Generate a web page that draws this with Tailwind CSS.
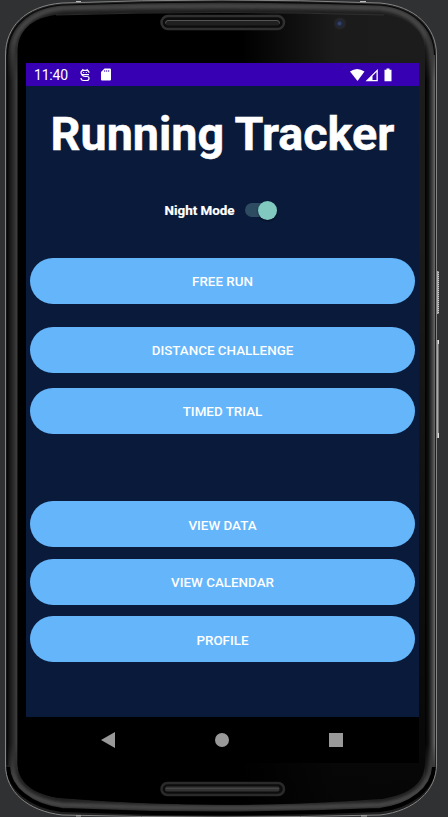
<!DOCTYPE html>
<html lang="en">
<head>
<meta charset="utf-8">
<title>Running Tracker</title>
<script src="https://cdn.jsdelivr.net/npm/@tailwindcss/browser@4"></script>
</head>
<body class="bg-[#303133] overflow-hidden font-['Roboto',sans-serif]">
<div class="relative w-[448px] h-[817px] overflow-hidden">
  <!-- Device frame -->
  <svg class="absolute inset-0" width="448" height="817" viewBox="0 0 448 817" fill="none">
    <defs>
      <linearGradient id="left"><stop offset="0" stop-color="#050505"/><stop offset=".25" stop-color="#161616"/><stop offset=".6" stop-color="#2c2c2c"/><stop offset="1" stop-color="#444"/></linearGradient>
      <linearGradient id="right"><stop offset="0" stop-color="#000"/><stop offset=".35" stop-color="#101010"/><stop offset=".7" stop-color="#3c3c3c"/><stop offset="1" stop-color="#6a6a6a"/></linearGradient>
      <linearGradient id="face"><stop offset=".55" stop-color="#000"/><stop offset=".78" stop-color="#1b1b1b"/><stop offset="1" stop-color="#1c1c1c"/></linearGradient>
      <linearGradient id="shade" x1="0" y1="0" x2="0" y2="1"><stop offset="0" stop-color="#000" stop-opacity="0"/><stop offset=".3" stop-color="#000" stop-opacity=".05"/><stop offset="1" stop-color="#000" stop-opacity=".8"/></linearGradient>
      <linearGradient id="key"><stop offset="0" stop-color="#555"/><stop offset=".5" stop-color="#aaa"/><stop offset="1" stop-color="#555"/></linearGradient>
      <linearGradient id="fade" x1="0" y1="0" x2="0" y2="1"><stop offset=".04" stop-color="#000"/><stop offset=".1" stop-color="#fff"/><stop offset=".91" stop-color="#fff"/><stop offset=".955" stop-color="#000"/></linearGradient>
      <mask id="ends" maskUnits="userSpaceOnUse" x="0" y="0" width="448" height="817"><rect width="448" height="817" fill="url(#fade)"/></mask>
      <clipPath id="body"><path d="M5.5 55C5.5 27 25 6 62 3Q221 -3 380 3C415 6 436.5 27 436.5 55V765C436.5 790 415 811 380 815Q221 819 62 815C28 811 5.5 792 5.5 765Z"/></clipPath>
      <filter id="soft" filterUnits="userSpaceOnUse" x="0" y="0" width="448" height="817"><feGaussianBlur stdDeviation="1.8"/></filter>
    </defs>
    <path d="M436 271h3v43h-3zM436 340h3v98h-3z" fill="url(#key)"/>
    <path d="M438.500 272v41" stroke="#ccc" stroke-dasharray="1 1"/>
    <path d="M438.500 340v4M438.500 433v5" stroke="#ddd"/>
    <g clip-path="url(#body)">
      <rect width="448" height="817" fill="#202020"/>
      <path d="M12 765V55C12 31 30 11 63 8Q221 4 380 8C412 11 430 31 430 55V765C430 787 412 801 380 805Q221 811 62 805C32 801 12 787 12 765Z" stroke="#464646" stroke-width="5" filter="url(#soft)"/>
      <g mask="url(#ends)">
        <rect x="7" y="20" width="11" height="780" fill="url(#left)"/>
        <rect x="425" y="20" width="10" height="780" fill="url(#right)"/>
      </g>
      <path d="M7.500 55C7.500 28 27 8 62 5Q221 -1 380 5C413 8 434.500 28 434.500 55" stroke="#080808" stroke-width="1.200"/>
      <path d="M7 55V765" stroke="#080808"/>
      <path d="M8 767C9 788 30 806 62 810Q221 817 380 810C412 806 433 788 434 767" stroke="#000" stroke-width="4"/>
    </g>
    <path d="M5.500 55C5.500 27 25 6 62 3Q221 -3 380 3C415 6 436.500 27 436.500 55V765C436.500 790 415 811 380 815Q221 819 62 815C28 811 5.500 792 5.500 765Z" stroke="#858585"/>
    <path d="M17.500 52C17.500 32 30 17 60 14.500Q221 10 380 14.500C411 17 425 32 425 52V762C425 782 411 795 380 799Q221 811 60 798C32 794 17.500 782 17.500 762Z" fill="url(#face)"/>
    <path d="M17.500 52C17.500 32 30 17 60 14.500Q221 10 380 14.500C411 17 425 32 425 52V762C425 782 411 795 380 799Q221 811 60 798C32 794 17.500 782 17.500 762Z" fill="url(#shade)"/>
    <path d="M56 15Q221 10 384 15" stroke="#333" stroke-width=".8"/>
    <path d="M76 1.500h5M360 1.500h6M76 816h5M361 816h6" stroke="#bbb"/>
    <!-- Speakers and camera -->
    <rect x="161.500" y="16" width="122.500" height="13" rx="6.500" fill="#0c0c0c" stroke="#303030" stroke-width="2.500"/>
    <rect x="165.500" y="20" width="114" height="5.500" rx="2.500" fill="#202020"/>
    <path d="M165.500 23.500Q165.500 20.500 168 20.500H277Q279.500 20.500 279.500 23.500" stroke="#555"/>
    <rect x="161.500" y="783" width="122.500" height="12" rx="6" fill="#0d0d0d" stroke="#2a2a2a" stroke-width="2.500"/>
    <rect x="165" y="786.500" width="114.500" height="5" rx="2" fill="#333"/>
    <path d="M166 788.500H279" stroke="#454545"/>
    <circle cx="340" cy="23.500" r="6" fill="#252525"/>
    <circle cx="340" cy="23.500" r="4" fill="#202738"/>
    <circle cx="339.500" cy="23.500" r="2" fill="#344068"/>
  </svg>

  <!-- App screen -->
  <div class="relative ml-[26px] mt-[63px] w-[393px] h-[700px] flex flex-col bg-[#0a1a3a] text-white">
    <header class="h-[23px] shrink-0 bg-[#3700b3] flex items-center justify-between pl-2 pr-[27px]">
      <div class="flex items-center">
        <span class="w-[46px] text-[14px] tracking-[-0.2px] leading-none pt-px">11:40</span>
        <svg class="block" width="10" height="14" viewBox="0 0 10 14" fill="none" stroke="white" stroke-width="1.200"><path d="M2.500 1l.7 1M7.500 1l-.7 1M9 6.700H3Q1 6.700 1 4.500Q1 2.300 3.500 2.300H6.500Q9 2.300 9 4.800M1.500 6.700Q3 8.500 5 8.500H7Q9 8.500 9 10.300Q9 12.500 7 12.500H3.500Q1 12.500 1 10"/><path d="M3.200 4.500h1M5.800 4.500h1" stroke-width="1"/></svg>
        <svg class="block ml-[11px]" width="10" height="13" viewBox="0 0 10 13"><path fill="white" d="M3.500 .5H9Q10 .5 10 1.500V11.500Q10 12.500 9 12.500H1Q0 12.500 0 11.500V4Z"/><path d="M3.700 2v2M5.700 2v2M7.700 2v2" stroke="#3700b3" stroke-width=".7"/></svg>
      </div>
      <svg class="block" width="44" height="14" viewBox="0 0 44 14" fill="white"><path d="M2 3.500Q9 -1.500 16.500 3.500L9.500 13Z"/><path fill-rule="evenodd" d="M29.800 1V13.300H17.500ZM28.500 4L24.500 8V12H28.500Z"/><path d="M38.500 .5h3v1.300h2V13.300h-7V1.800h2Z"/></svg>
    </header>

    <main class="h-[631px] shrink-0 flex flex-col px-1">
      <h1 class="mt-[20px] h-[56px] text-center text-[46.700px] leading-[56px] font-bold whitespace-nowrap [-webkit-text-stroke:0.500px_white]">Running Tracker</h1>
      <label class="mt-[38px] h-5 pl-[134.500px] flex items-center">
        <span class="w-[80.500px] text-[13.400px] font-bold whitespace-nowrap pt-[3px] [-webkit-text-stroke:0.200px_white]">Night Mode</span>
        <span class="w-8 h-[14px] rounded-full bg-[#2d4b61] flex items-center justify-end"><span class="size-[19px] shrink-0 rounded-full bg-[#80c8c0] shadow-[0_1px_2px_#0008]"></span></span>
      </label>
      <nav class="mt-[38px] flex flex-col text-[13.400px] font-medium text-center">
        <button class="h-[46px] rounded-full bg-[#64b5f9] pt-[3px]">FREE RUN</button>
        <button class="mt-[23px] h-[46px] rounded-full bg-[#64b5f9] pt-[3px]">DISTANCE CHALLENGE</button>
        <button class="mt-[15px] h-[46px] rounded-full bg-[#64b5f9] pt-[3px]">TIMED TRIAL</button>
      </nav>
      <nav class="mt-[67.400px] flex flex-col gap-[11.400px] text-[13.400px] font-medium text-center">
        <button class="h-[46px] rounded-full bg-[#64b5f9] pt-[3px]">VIEW DATA</button>
        <button class="h-[46px] rounded-full bg-[#64b5f9] pt-[3px]">VIEW CALENDAR</button>
        <button class="h-[46px] rounded-full bg-[#64b5f9] pt-[3px]">PROFILE</button>
      </nav>
    </main>

    <footer class="h-[46px] shrink-0 bg-black flex items-center pl-[75px] gap-[100px]">
      <svg width="14" height="16" viewBox="0 0 14 16" fill="#999"><path d="M0 8L14 0V16Z"/></svg>
      <span class="size-[14px] rounded-full bg-[#999]"></span>
      <span class="size-[14px] bg-[#999]"></span>
    </footer>
  </div>
</div>
</body>
</html>
